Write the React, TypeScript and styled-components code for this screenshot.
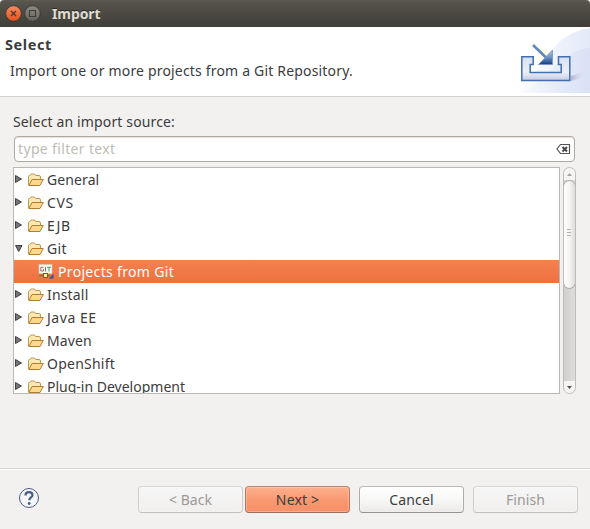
import React from "react";
import styled, { createGlobalStyle } from "styled-components";

const Global = createGlobalStyle`
  * { box-sizing: border-box; }
  body { margin: 0; background: #f2f1f0; overflow: hidden; }
`;

const Dialog = styled.div`
  width: 590px;
  height: 529px;
  display: flex;
  flex-direction: column;
  background: #f2f1f0;
  color: #3c3c3c;
  font-family: "Noto Sans", "Open Sans", sans-serif;
  font-size: 14px;
  line-height: 20px;
  white-space: nowrap;
`;

const Text = styled.span<{ $track?: number }>`
  letter-spacing: ${(p) => p.$track ?? 0}px;
`;

const TitleBar = styled.header`
  height: 27px;
  flex: none;
  display: flex;
  align-items: center;
  padding-left: 5px;
  background: linear-gradient(#5f5d53 0, #56544b 2px, #3e3d38 100%);
  color: #dfdbd2;
  font-weight: 700;
  border-radius: 4px 4px 0 0;
`;

const TitleText = styled(Text)`
  margin-left: 11px;
  text-shadow: 0 -1px 0 #2b2a26;
`;

const Banner = styled.section`
  height: 70px;
  flex: none;
  display: flex;
  justify-content: space-between;
  background: #fff;
  border-bottom: 1px solid #d5d3d1;
`;

const BannerCopy = styled.div`
  padding: 7px 0 0 5px;
`;

const BannerTitle = styled.h1`
  margin: 0;
  font-size: 14.5px;
  line-height: 20px;
`;

const BannerMessage = styled.p`
  margin: 7px 0 0 5px;
`;

const Body = styled.main`
  height: 372px;
  flex: none;
  padding: 15px 14px 0 13px;
  border-bottom: 1px solid #d9d7d5;
  box-shadow: 0 1px 0 #fbfbfa;
`;

const Label = styled.div`
  height: 24px;
`;

const Filter = styled.div`
  height: 26px;
  width: 561px;
  margin-left: 1px;
  display: flex;
  align-items: center;
  justify-content: space-between;
  padding: 0 3px;
  border: 1px solid #aeaaa3;
  border-radius: 4px;
  background: #fff;
  color: #bfbbb6;
  box-shadow: inset 0 1px 1px #e6e4e2;
`;

const ListArea = styled.div`
  display: flex;
  gap: 3px;
  margin-top: 5px;
`;

const Tree = styled.ul`
  width: 547px;
  height: 227px;
  margin: 0;
  padding: 0;
  list-style: none;
  overflow: hidden;
  border: 1px solid #bab8b5;
  background: #fff;
`;

const Row = styled.li<{ $selected?: boolean; $child?: boolean }>`
  height: 23px;
  display: flex;
  align-items: center;
  padding-left: ${(p) => (p.$child ? 24 : 1)}px;
  background: ${(p) => (p.$selected ? "linear-gradient(#f4814f, #ee7140)" : "none")};
  color: ${(p) => (p.$selected ? "#fff" : "inherit")};
  gap: ${(p) => (p.$child ? 4 : 3)}px;
`;

const Scrollbar = styled.div`
  width: 13px;
  height: 227px;
  display: flex;
  flex-direction: column;
  border: 1px solid #bdbab7;
  border-radius: 7px;
  background: linear-gradient(90deg, #d2d0ce, #dfdddb);
  overflow: hidden;
`;

const ScrollEnd = styled.div<{ $bottom?: boolean }>`
  height: 12px;
  flex: none;
  display: flex;
  align-items: center;
  justify-content: center;
  background: #f6f5f4;
  margin-top: ${(p) => (p.$bottom ? "auto" : "0")};
`;

const Thumb = styled.div`
  height: 109px;
  flex: none;
  display: flex;
  flex-direction: column;
  align-items: center;
  justify-content: center;
  gap: 2px;
  margin: 0 -1px;
  padding: 0 1px 4px 0;
  border: 1px solid #aaa7a3;
  border-radius: 7px;
  background: linear-gradient(90deg, #fff, #f5f4f3 50%, #dedcda);
`;

const Grip = styled.span`
  width: 4px;
  height: 1px;
  background: #b4b1ae;
`;

const Footer = styled.footer`
  display: flex;
  align-items: flex-start;
  padding: 17px 12px 0 18px;
`;

const HelpSlot = styled.div`
  width: 120px;
  padding-top: 1px;
`;

type Kind = "normal" | "primary" | "disabled";

const fills: Record<Kind, string> = {
  normal: "linear-gradient(#ffffff, #f8f8f7 50%, #ebeae8)",
  primary: "linear-gradient(#fdb08f, #f8986f 55%, #f7906a)",
  disabled: "linear-gradient(#f7f6f6, #f0efee)",
};
const edges: Record<Kind, string> = {
  normal: "#bcb9b5 #b0ada8 #96938e",
  primary: "#b98672 #a97966 #9b6d5b",
  disabled: "#d9d7d4 #cfcdca #c2c0bc",
};

const Button = styled.button<{ $kind: Kind; $gap: number }>`
  width: 105px;
  height: 27px;
  margin: 0 0 0 ${(p) => p.$gap}px;
  padding: 0;
  font: inherit;
  color: ${(p) => (p.$kind === "disabled" ? "#9b9996" : "#3c3c3c")};
  background: ${(p) => fills[p.$kind]};
  border: 1px solid;
  border-color: ${(p) => edges[p.$kind]};
  border-radius: 4px;
  box-shadow: inset 0 0 0 1px rgba(255, 255, 255, 0.25);
`;

const WindowControls = () => (
  <svg width="36" height="18" viewBox="5 5 36 18">
    <defs>
      <linearGradient id="close" x2="0" y2="1">
        <stop stopColor="#f68b62" />
        <stop offset="1" stopColor="#e2511d" />
      </linearGradient>
      <linearGradient id="max" x2="0" y2="1">
        <stop stopColor="#8d8a80" />
        <stop offset="1" stopColor="#65635b" />
      </linearGradient>
    </defs>
    <circle cx="13.5" cy="13.5" r="7.8" fill="url(#close)" stroke="#34332e" strokeWidth="0.8" />
    <path d="M11 11l5 5M16 11l-5 5" stroke="#4a3a30" strokeWidth="1.3" />
    <circle cx="32.5" cy="13.5" r="7.8" fill="url(#max)" stroke="#34332e" strokeWidth="0.8" />
    <rect x="29.5" y="10.5" width="6" height="6" fill="none" stroke="#3c3b37" />
  </svg>
);

const BannerArt = () => (
  <svg width="76" height="66" viewBox="514 27 76 66">
    <defs>
      <linearGradient id="sky" x1="0" x2="1" y1="0" y2="0">
        <stop stopColor="#fff" />
        <stop offset="0.3" stopColor="#f6f8fd" />
        <stop offset="1" stopColor="#e2e9f8" />
      </linearGradient>
      <linearGradient id="haze" x1="0" x2="1" y1="0" y2="0">
        <stop stopColor="#dde4f6" stopOpacity="0" />
        <stop offset="1" stopColor="#d5def4" />
      </linearGradient>
      <linearGradient id="tray" x2="0" y2="1">
        <stop stopColor="#d9e2f0" />
        <stop offset="0.65" stopColor="#eeeef8" />
        <stop offset="1" stopColor="#c3c9e2" />
      </linearGradient>
      <linearGradient id="shade" x2="1">
        <stop stopColor="#b9b2cc" />
        <stop offset="1" stopColor="#e6e4f2" stopOpacity="0" />
      </linearGradient>
      <linearGradient id="arrow" x2="0" y2="1">
        <stop stopColor="#a9c0df" />
        <stop offset="0.5" stopColor="#6f95c6" />
        <stop offset="1" stopColor="#123f82" />
      </linearGradient>
    </defs>
    <path d="M514 93C542 78 546 34 590 28V93Z" fill="url(#sky)" />
    <path d="M516 93C546 88 556 50 590 48V93Z" fill="url(#haze)" opacity="0.7" />
    <circle cx="544" cy="55" r="6" fill="#fdfbe2" opacity="0.8" />
    <path d="M571 76L586 71Q586 77 571 81Z" fill="url(#shade)" />
    <path d="M521.8 56.800h11.400v7.700h-3v8h31v-8h-2.700v-7.700h11.300v23.800h-48Z" fill="url(#tray)" stroke="#426fae" strokeWidth="1.500" />
    <path d="M533 45l13 12.500" stroke="#5f88bd" strokeWidth="2.600" />
    <path d="M552.500 50v14.500h-14Z" fill="url(#arrow)" stroke="#7396c5" strokeWidth="0.800" />
  </svg>
);

const Expander = ({ open }: { open?: boolean }) => (
  <svg width="10" height="12" viewBox="0 0 10 12">
    <path d={open ? "M.5 2.5h6.500L3.750 8.500Z" : "M.5 1.5v7L6.5 5Z"} fill="#777" stroke="#333" strokeWidth="0.9" />
  </svg>
);

const Folder = () => (
  <svg width="16" height="16" viewBox="0 0 16 16">
    <path d="M.5 13V4.5Q.5 3.5 1.5 3.5H2L3 2h3.5l1 1.5H11Q12.500 3.500 12.500 5V7" fill="#fbe9b5" stroke="#c6964c" />
    <path d="M.8 13.500L4 7.500H15.300L12 13.500Z" fill="#fad98f" stroke="#b87b2c" />
  </svg>
);

const GitIcon = () => (
  <svg width="16" height="16" viewBox="0 0 16 16">
    <rect x="1" y="0.500" width="13" height="9" fill="#f8f8f2" stroke="#cfcdb5" strokeWidth="0.6" />
    <path d="M5.500 3.300h-2.700v3.700h2.700v-1.800" fill="none" stroke="#a35d62" strokeWidth="0.900" />
    <path d="M7.500 3v4.500" stroke="#5b6f68" strokeWidth="0.900" />
    <path d="M9 3.300h4M11 3.300v4.200" stroke="#35965d" strokeWidth="0.900" />
    <path d="M1 11.500h11" stroke="#4c8d3c" strokeWidth="1.500" />
    <rect x="5.500" y="9.500" width="4" height="4" fill="#f7ed9c" stroke="#557320" />
    <path d="M15.500 9.800v4.700h-4.700Z" fill="#1f5c9e" />
  </svg>
);

const ClearIcon = () => (
  <svg width="15" height="12" viewBox="0 0 15 12">
    <path d="M4.500 1.500h9v9h-9L1 6Z" fill="#fff" stroke="#555" strokeWidth="1.200" />
    <path d="M6.500 4l4.500 4.500M11 4L6.500 8.500" stroke="#444" strokeWidth="1.800" />
  </svg>
);

const HelpIcon = () => (
  <svg width="22" height="22" viewBox="0 0 22 22">
    <circle cx="11" cy="11" r="9.500" fill="#f5f6fa" stroke="#4a5d84" />
    <path d="M7.500 8.500Q7.500 5.200 11 5.200T14.500 8.200C14.500 10.500 11.300 10.500 11.300 13.200" fill="none" stroke="#4a5d84" strokeWidth="2.200" />
    <circle cx="11.200" cy="16.500" r="1.400" fill="#4a5d84" />
  </svg>
);

const Arrow = ({ down }: { down?: boolean }) => (
  <svg width="5" height="3" viewBox="0 0 5 3">
    <path d={down ? "M0 0h5L2.500 3Z" : "M0 3h5L2.500 0Z"} fill={down ? "#555" : "#a5a29e"} />
  </svg>
);

type Item = { name: string; open?: boolean; child?: boolean; track?: number };

const items: Item[] = [
  { name: "General", track: 0.1 },
  { name: "CVS", track: 0.6 },
  { name: "EJB", track: 0.8 },
  { name: "Git", open: true, track: 0.4 },
  { name: "Projects from Git", child: true, track: 0.33 },
  { name: "Install", track: 0.17 },
  { name: "Java EE", track: 0.55 },
  { name: "Maven", track: 0.1 },
  { name: "OpenShift", track: 0.24 },
  { name: "Plug-in Development" },
];

export default function App() {
  return (
    <Dialog>
      <Global />
      <TitleBar>
        <WindowControls />
        <TitleText $track={-0.1}>Import</TitleText>
      </TitleBar>
      <Banner>
        <BannerCopy>
          <BannerTitle><Text $track={0.6}>Select</Text></BannerTitle>
          <BannerMessage><Text $track={0.18}>Import one or more projects from a Git Repository.</Text></BannerMessage>
        </BannerCopy>
        <BannerArt />
      </Banner>
      <Body>
        <Label><Text $track={0.14}>Select an import source:</Text></Label>
        <Filter>
          <Text $track={0.35}>type filter text</Text>
          <ClearIcon />
        </Filter>
        <ListArea>
          <Tree>
            {items.map((it) => (
              <Row key={it.name} $child={it.child} $selected={it.child}>
                {it.child ? <GitIcon /> : <><Expander open={it.open} /><Folder /></>}
                <Text $track={it.track}>{it.name}</Text>
              </Row>
            ))}
          </Tree>
          <Scrollbar>
            <ScrollEnd><Arrow /></ScrollEnd>
            <Thumb><Grip /><Grip /><Grip /></Thumb>
            <ScrollEnd $bottom><Arrow down /></ScrollEnd>
          </Scrollbar>
        </ListArea>
      </Body>
      <Footer>
        <HelpSlot><HelpIcon /></HelpSlot>
        <Button $kind="disabled" $gap={0}><Text>&lt; Back</Text></Button>
        <Button $kind="primary" $gap={2}><Text $track={0.15}>Next &gt;</Text></Button>
        <Button $kind="normal" $gap={9}><Text $track={0.15}>Cancel</Text></Button>
        <Button $kind="disabled" $gap={9}><Text $track={0.1}>Finish</Text></Button>
      </Footer>
    </Dialog>
  );
}
